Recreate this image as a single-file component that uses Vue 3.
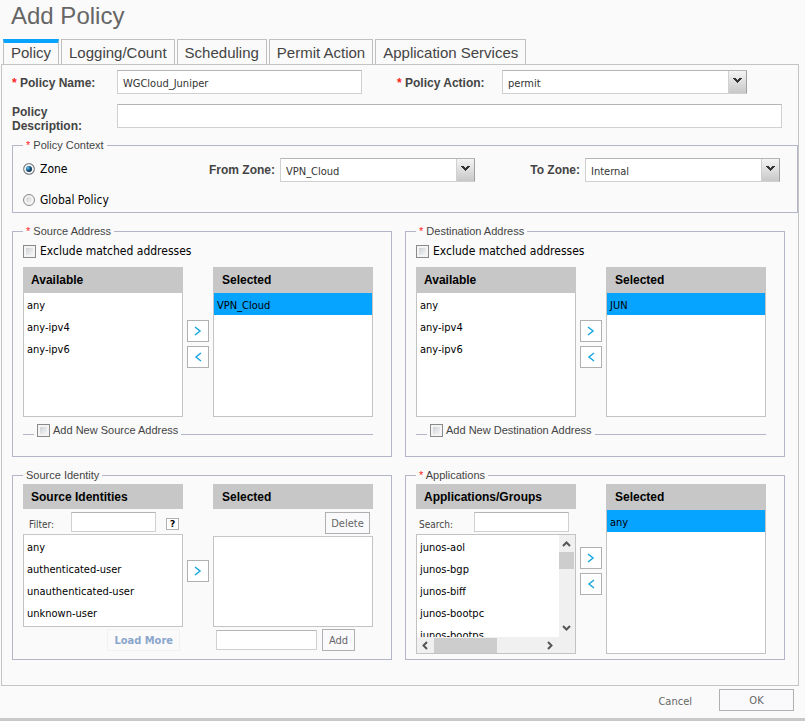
<script setup>
import { ref } from 'vue'

const tabs = ['Policy', 'Logging/Count', 'Scheduling', 'Permit Action', 'Application Services']
const activeTab = ref('Policy')

const policyName = ref('WGCloud_Juniper')
const description = ref('')
const action = ref('permit')
const context = ref('zone')
const fromZone = ref('VPN_Cloud')
const toZone = ref('Internal')

const addressBoxes = ref([
  { id: 'src', title: 'Source Address', add: 'Add New Source Address', selected: ['VPN_Cloud'], exclude: false, addNew: false },
  { id: 'dst', title: 'Destination Address', add: 'Add New Destination Address', selected: ['JUN'], exclude: false, addNew: false },
])
const addresses = ['any', 'any-ipv4', 'any-ipv6']
const identities = ['any', 'authenticated-user', 'unauthenticated-user', 'unknown-user']
const applications = ['junos-aol', 'junos-bgp', 'junos-biff', 'junos-bootpc', 'junos-bootps']
const filter = ref('')
const search = ref('')
const newIdentity = ref('')
</script>

<template>
  <main class="dialog">
    <h1>Add Policy</h1>

    <nav class="tabs" role="tablist">
      <button
        v-for="tab in tabs"
        :key="tab"
        type="button"
        role="tab"
        class="tab"
        :class="{ active: tab === activeTab }"
        :aria-selected="tab === activeTab"
        @click="activeTab = tab"
      >{{ tab }}</button>
    </nav>

    <form class="panel" @submit.prevent>
      <div class="row name-row">
        <label for="name" class="field-label"><b class="req">*</b> Policy Name:</label>
        <input id="name" v-model="policyName" type="text" class="text">
        <label for="action" class="field-label action-label"><b class="req">*</b> Policy Action:</label>
        <div class="combo">
          <select id="action" v-model="action"><option>permit</option></select>
          <span class="arrow"><svg width="9" height="6" viewBox="0 0 9 6"><path d="M0 0h3v1h1v1h1V1h1V0h3v1H8v1H7v1H6v1H5v1H4V4H3V3H2V2H1V1H0z" /></svg></span>
        </div>
      </div>

      <div class="row desc-row">
        <label for="desc" class="field-label">Policy Description:</label>
        <input id="desc" v-model="description" type="text" class="text">
      </div>

      <fieldset class="context">
        <legend><b class="req">*</b> Policy Context</legend>
        <div class="zones">
          <label class="choice"><input v-model="context" type="radio" name="context" value="zone">Zone</label>
          <label for="from" class="field-label zone-label">From Zone:</label>
          <div class="combo">
            <select id="from" v-model="fromZone"><option>VPN_Cloud</option></select>
            <span class="arrow"><svg width="9" height="6" viewBox="0 0 9 6"><path d="M0 0h3v1h1v1h1V1h1V0h3v1H8v1H7v1H6v1H5v1H4V4H3V3H2V2H1V1H0z" /></svg></span>
          </div>
          <label for="to" class="field-label zone-label">To Zone:</label>
          <div class="combo">
            <select id="to" v-model="toZone"><option>Internal</option></select>
            <span class="arrow"><svg width="9" height="6" viewBox="0 0 9 6"><path d="M0 0h3v1h1v1h1V1h1V0h3v1H8v1H7v1H6v1H5v1H4V4H3V3H2V2H1V1H0z" /></svg></span>
          </div>
        </div>
        <label class="choice"><input v-model="context" type="radio" name="context" value="global">Global Policy</label>
      </fieldset>

      <div class="columns">
        <fieldset v-for="box in addressBoxes" :key="box.id" class="box">
          <legend><b class="req">*</b> {{ box.title }}</legend>
          <label class="choice exclude"><input v-model="box.exclude" type="checkbox">Exclude matched addresses</label>
          <div class="transfer address">
            <section class="pane">
              <h2>Available</h2>
              <select multiple class="list" :aria-label="box.title + ' available'">
                <option v-for="a in addresses" :key="a">{{ a }}</option>
              </select>
            </section>
            <div class="movers">
              <button type="button" class="mover" aria-label="Add"><svg width="8" height="10" viewBox="0 0 8 10"><path d="M1 1l5 4-5 4" /></svg></button>
              <button type="button" class="mover" aria-label="Remove"><svg width="8" height="10" viewBox="0 0 8 10"><path d="M7 1L2 5l5 4" /></svg></button>
            </div>
            <section class="pane">
              <h2>Selected</h2>
              <select v-model="box.selected" multiple class="list" :aria-label="box.title + ' selected'">
                <option v-for="s in box.selected" :key="s">{{ s }}</option>
              </select>
            </section>
          </div>
          <div class="add-new">
            <label><input v-model="box.addNew" type="checkbox">{{ box.add }}</label>
          </div>
        </fieldset>
      </div>

      <div class="columns">
        <fieldset class="box lower">
          <legend>Source Identity</legend>
          <div class="transfer">
            <section class="pane">
              <h2>Source Identities</h2>
              <div class="tools">
                <label for="filter">Filter:</label>
                <input id="filter" v-model="filter" type="text" class="text small filter">
                <button type="button" class="help" aria-label="Help">?</button>
              </div>
              <select multiple class="list short" aria-label="Source identities">
                <option v-for="i in identities" :key="i">{{ i }}</option>
              </select>
              <button type="button" class="load">Load More</button>
            </section>
            <div class="movers">
              <button type="button" class="mover" aria-label="Add"><svg width="8" height="10" viewBox="0 0 8 10"><path d="M1 1l5 4-5 4" /></svg></button>
            </div>
            <section class="pane">
              <h2>Selected</h2>
              <div class="delete-row"><button type="button" class="btn">Delete</button></div>
              <select multiple class="list chosen" aria-label="Selected identities"></select>
              <div class="add-row">
                <input v-model="newIdentity" type="text" class="text small" aria-label="New identity">
                <button type="button" class="btn">Add</button>
              </div>
            </section>
          </div>
        </fieldset>

        <fieldset class="box lower">
          <legend><b class="req">*</b> Applications</legend>
          <div class="transfer">
            <section class="pane">
              <h2>Applications/Groups</h2>
              <div class="tools">
                <label for="search">Search:</label>
                <input id="search" v-model="search" type="text" class="text small search">
              </div>
              <div class="scroller">
                <select multiple class="list" aria-label="Applications and groups">
                  <option v-for="a in applications" :key="a">{{ a }}</option>
                </select>
                <div class="vbar">
                  <svg width="9" height="6" viewBox="0 0 9 6"><path d="M1 5l3.500-3.500L8 5" /></svg>
                  <i class="thumb"></i>
                  <svg class="end" width="9" height="6" viewBox="0 0 9 6"><path d="M1 1l3.500 3.500L8 1" /></svg>
                </div>
                <div class="hbar">
                  <svg width="6" height="9" viewBox="0 0 6 9"><path d="M5 1L1.500 4.500 5 8" /></svg>
                  <i class="thumb"></i>
                  <svg class="end" width="6" height="9" viewBox="0 0 6 9"><path d="M1 1l3.500 3.500L1 8" /></svg>
                </div>
              </div>
            </section>
            <div class="movers">
              <button type="button" class="mover" aria-label="Add"><svg width="8" height="10" viewBox="0 0 8 10"><path d="M1 1l5 4-5 4" /></svg></button>
              <button type="button" class="mover" aria-label="Remove"><svg width="8" height="10" viewBox="0 0 8 10"><path d="M7 1L2 5l5 4" /></svg></button>
            </div>
            <section class="pane">
              <h2>Selected</h2>
              <select multiple class="list" aria-label="Selected applications">
                <option selected>any</option>
              </select>
            </section>
          </div>
        </fieldset>
      </div>
    </form>

    <footer>
      <button type="button" class="cancel">Cancel</button>
      <button type="button" class="btn ok">OK</button>
    </footer>
  </main>
</template>

<style>
body {
  background: #c9c9c9;
}
</style>

<style scoped>
* {
  box-sizing: border-box;
}
.dialog {
  background: #fafafa;
  color: #444;
  font: 11px/14px "DejaVu Sans Condensed", "DejaVu Sans", sans-serif;
  box-shadow: 0 1px 4px #888;
  padding-bottom: 7px;
}
h1 {
  margin: 0;
  padding: 2px 11px 9px;
  font: 24px/28px "Liberation Sans", Arial, sans-serif;
  color: #666;
}
button,
input,
select {
  font: inherit;
  margin: 0;
}
.tabs {
  display: flex;
  gap: 2px;
  padding-left: 3px;
}
.tab {
  height: 25px;
  padding: 1px 7px 0;
  border: 1px solid #c0c0c0;
  border-bottom: 0;
  background: #fafafa;
  color: #444;
  font: 15px/20px "Liberation Sans", Arial, sans-serif;
}
.tab.active {
  border-top: 4px solid #06a3ff;
  padding: 0 7px 2px;
}
.panel {
  margin: 0 6px 0 1px;
  padding: 5px 0 25px 10px;
  border: 1px solid #c4c4c4;
}
.row {
  display: grid;
  align-items: center;
}
.name-row {
  grid-template-columns: 105px 1fr 140px 1fr;
  padding-right: 51px;
}
.name-row .field-label {
  padding-top: 2px;
}
.desc-row {
  grid-template-columns: 105px 1fr;
  padding-right: 16px;
  margin: 10px 0;
}
.desc-row .field-label {
  margin: 0 20px -6px 0;
}
.field-label {
  font: bold 12px/14px "Liberation Sans", Arial, sans-serif;
}
.action-label {
  padding-left: 35px;
}
.req {
  color: #f22;
  font-weight: bold;
}
.text {
  width: 100%;
  min-width: 0;
  height: 24px;
  padding: 2px 5px 0;
  border: 1px solid #d0d0d0;
  border-top-color: #b5b5b5;
  background: #fff;
  color: #333;
  outline: 0;
}
.text.small {
  height: 20px;
}
.combo {
  display: grid;
  grid-template-columns: 1fr 18px;
  height: 24px;
  border: 1px solid #d0d0d0;
  border-top-color: #b5b5b5;
  border-right-color: #a0a0a0;
  background: #fff;
}
.combo select {
  grid-area: 1 / 1 / 2 / 3;
  appearance: none;
  min-width: 0;
  padding: 3px 20px 0 5px;
  border: 0;
  background: transparent;
  color: #333;
  outline: 0;
}
.combo .arrow {
  grid-area: 1 / 2;
  display: flex;
  justify-content: center;
  padding-top: 7px;
  border-left: 1px solid #d0d0d0;
  background: linear-gradient(#f4f4f4, #c8c8c8);
  pointer-events: none;
}
.arrow path {
  fill: #333;
}
fieldset {
  margin: 0;
  min-width: 0;
  padding: 0 0 0 10px;
  border: 1px solid #b3b5c8;
}
legend {
  padding: 0 3px;
  font: 11px/15px "Liberation Sans", Arial, sans-serif;
}
legend .req {
  font-weight: normal;
}
.context {
  padding: 5px 17px 5px 10px;
}
.zones {
  display: grid;
  grid-template-columns: 183px 64px 1fr 100px 1fr;
  gap: 5px;
  align-items: center;
  margin-bottom: 11px;
}
.zones .choice {
  margin-bottom: 3px;
}
.zone-label {
  display: flex;
  justify-content: flex-end;
  white-space: nowrap;
}
.choice {
  display: flex;
  align-items: center;
  gap: 4px;
  color: #000;
  font-size: 12px;
}
input[type="checkbox"],
input[type="radio"] {
  appearance: none;
  flex: none;
  width: 13px;
  height: 13px;
  border: 1px solid #8a8a8a;
  background: linear-gradient(135deg, #c4c8cc, #fff);
  box-shadow: inset 0 0 0 2px #f4f4f4;
}
input[type="radio"] {
  width: 12px;
  height: 12px;
  margin-right: 1px;
  border-radius: 50%;
}
input[type="radio"]:checked {
  background: radial-gradient(circle at 4px 4px, #7cc8ee 0, #1b6a9c 2px, #0d2c48 4px);
}
input[type="checkbox"]:checked {
  background: #06a3ff;
}
.columns {
  display: grid;
  grid-template-columns: 1fr 1fr;
  gap: 13px;
  margin-top: 11px;
  padding-right: 13px;
}
.box {
  padding-right: 18px;
}
.exclude {
  height: 14px;
  margin: 5px 0 9px;
}
.transfer {
  display: grid;
  grid-template-columns: 1fr 30px 1fr;
}
.address {
  height: 150px;
}
.lower {
  padding-top: 1px;
  padding-bottom: 5px;
}
.lower .transfer {
  height: 170px;
}
.pane {
  display: flex;
  flex-direction: column;
  min-width: 0;
  min-height: 0;
}
h2 {
  flex: none;
  margin: 0;
  padding: 1px 0 0 8px;
  background: #c7c7c7;
  color: #000;
  font: bold 12px/24px "Liberation Sans", Arial, sans-serif;
}
.address h2 {
  padding-bottom: 1px;
}
.pane:last-child h2 {
  padding-left: 9px;
}
.list {
  flex: 1;
  width: 100%;
  min-height: 0;
  padding: 0;
  border: 1px solid #c3c3c3;
  border-top-color: #c7c7c7;
  border-radius: 0;
  background: #fff;
  color: #000;
  outline: 0;
  overflow: hidden;
}
.address .list {
  border-top: 0;
}
.list option {
  min-height: 22px;
  padding: 6px 3px 2px;
  line-height: 14px;
  color: #000;
}
.list option:checked {
  background: linear-gradient(#06a3ff, #06a3ff);
  color: #000;
}
.movers {
  display: flex;
  flex-direction: column;
  align-items: center;
  justify-content: center;
  gap: 4px;
  padding-top: 4px;
}
.mover {
  display: grid;
  place-items: center;
  width: 22px;
  height: 22px;
  padding: 0;
  border: 1px solid #b0b0b0;
  background: #fff;
}
.mover path {
  fill: none;
  stroke: #1aa7e0;
  stroke-width: 1.5;
}
.add-new {
  display: flex;
  align-items: center;
  height: 14px;
  margin: 6px 0 19px;
}
.add-new::before,
.add-new::after {
  content: "";
  width: 11px;
  height: 1px;
  margin-top: 8px;
  background: #b3b5c8;
}
.add-new::after {
  flex: 1;
}
.add-new label {
  display: flex;
  align-items: center;
  gap: 3px;
  padding: 0 3px;
  font: 11px/14px "Liberation Sans", Arial, sans-serif;
}
.tools {
  display: flex;
  align-items: center;
  height: 25px;
  flex: none;
  padding-left: 3px;
  font-size: 10px;
}
.tools label {
  flex: 1;
  padding-top: 6px;
}
.tools .text {
  flex: none;
}
.tools .filter {
  width: 85px;
  margin-right: 10px;
}
.tools .search {
  width: 95px;
  margin-right: 7px;
}
.tools:has(.filter) {
  padding-left: 6px;
}
.help {
  width: 13px;
  height: 12px;
  margin: 4px 4px 0 0;
  padding: 0;
  border: 1px solid #b0b0b0;
  background: #fff;
  color: #000;
  font: bold 9px/10px "DejaVu Sans", sans-serif;
}
.list.short {
  flex: none;
  height: 93px;
}
.list.chosen {
  flex: none;
  height: 91px;
}
.btn {
  height: 22px;
  padding: 1px 5px 0;
  border: 1px solid #b0b0b0;
  background: #fafafc;
  color: #666;
}
.delete-row {
  flex: none;
  height: 27px;
  padding: 3px 3px 0 0;
  text-align: right;
}
.load {
  align-self: flex-end;
  height: 22px;
  margin: 2px 3px 0 0;
  padding: 1px 6px 0;
  border: 1px solid #f2f2f2;
  background: #fafafa;
  color: #8ba6cc;
  font-weight: bold;
}
.add-row {
  display: flex;
  align-items: center;
  gap: 5px;
  padding: 2px 18px 0 3px;
}
.add-row .btn {
  flex: none;
  width: 33px;
}
.delete-row .btn {
  width: 45px;
}
.scroller {
  flex: 1;
  min-height: 0;
  display: grid;
  grid-template-columns: 1fr 16px;
  grid-template-rows: 1fr 16px;
  border: 1px solid #c3c3c3;
  background: #f0f0f0;
}
.scroller .list {
  height: 100%;
  border: 0;
}
.vbar,
.hbar {
  display: flex;
  align-items: center;
}
.vbar {
  flex-direction: column;
  padding: 6px 1px 6px 0;
}
.hbar {
  padding: 0 6px 0 5px;
}
.vbar svg,
.hbar svg {
  flex: none;
}
.vbar path,
.hbar path {
  fill: none;
  stroke: #555;
  stroke-width: 2;
}
.thumb {
  background: #cdcdcd;
}
.vbar .thumb {
  width: 15px;
  height: 17px;
  margin-top: 5px;
}
.hbar .thumb {
  width: 63px;
  height: 15px;
  margin-left: 6px;
}
.vbar .end {
  margin-top: auto;
}
.hbar .end {
  margin-left: auto;
}
footer {
  display: flex;
  justify-content: flex-end;
  align-items: center;
  gap: 27px;
  padding: 3px 11px 0 0;
}
.cancel {
  padding: 3px 0 0;
  border: 0;
  background: transparent;
  color: #666;
}
.ok {
  width: 75px;
  padding-top: 2px;
}
</style>
